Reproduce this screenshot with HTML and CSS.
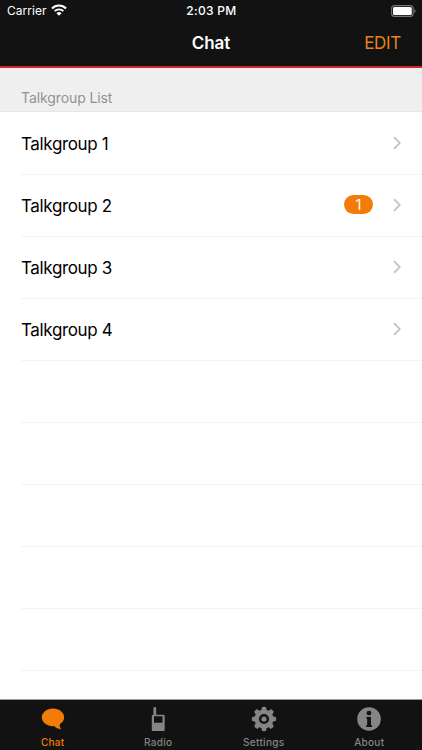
FILE: index.html
```html
<!DOCTYPE html>
<html lang="en">
<head>
    <meta charset="UTF-8">
    <meta name="viewport" content="width=device-width, initial-scale=1.0">
    <title>Chat</title>
    <link rel="stylesheet" href="styles.css">
</head>
<body>
    <header class="header">
        <div class="status-bar">
            <div class="carrier">
                <span>Carrier</span>
                <svg class="wifi" viewBox="0 0 16 12" width="16" height="12">
                    <path d="M1 4.4 A10 10 0 0 1 15 4.4" fill="none" stroke="#fff" stroke-width="2.1"/>
                    <path d="M3.6 7.2 A6.2 6.2 0 0 1 12.4 7.2" fill="none" stroke="#fff" stroke-width="1.9"/>
                    <path d="M8 11.8 L5.4 9.2 A3.7 3.7 0 0 1 10.6 9.2 Z" fill="#fff"/>
                </svg>
            </div>
            <span class="time">2:03 PM</span>
            <svg class="battery" viewBox="0 0 25 12" width="25" height="12">
                <rect x="0.6" y="0.6" width="21.6" height="10.8" rx="3" fill="none" stroke="#777" stroke-width="1.1"/>
                <rect x="2" y="2" width="18.8" height="8" rx="1.5" fill="#fff"/>
                <path d="M23.3 4 Q24.6 4.6 24.6 6 Q24.6 7.4 23.3 8 Z" fill="#777"/>
            </svg>
        </div>
        <div class="nav-bar">
            <h1>Chat</h1>
            <a class="edit">EDIT</a>
        </div>
    </header>

    <main>
        <h2 class="list-title"><span>Talkgroup List</span></h2>
        <ul class="talkgroups">
            <li>
                <span class="name">Talkgroup 1</span>
                <svg class="chevron" viewBox="0 0 8 14" width="8" height="14"><path d="M1 1.2 L6.8 7 L1 12.8"/></svg>
            </li>
            <li>
                <span class="name">Talkgroup 2</span>
                <span class="badge">1</span>
                <svg class="chevron" viewBox="0 0 8 14" width="8" height="14"><path d="M1 1.2 L6.8 7 L1 12.8"/></svg>
            </li>
            <li>
                <span class="name">Talkgroup 3</span>
                <svg class="chevron" viewBox="0 0 8 14" width="8" height="14"><path d="M1 1.2 L6.8 7 L1 12.8"/></svg>
            </li>
            <li>
                <span class="name">Talkgroup 4</span>
                <svg class="chevron" viewBox="0 0 8 14" width="8" height="14"><path d="M1 1.2 L6.8 7 L1 12.8"/></svg>
            </li>
            <li></li>
            <li></li>
            <li></li>
            <li></li>
            <li></li>
            <li></li>
        </ul>
    </main>

    <nav class="tab-bar">
        <a class="tab active">
            <svg viewBox="0 0 26 26" width="26" height="26">
                <path d="M13 2.4 C19.2 2.4 24.2 6.3 24.2 11.3 C24.2 14.1 22.6 16.5 19.9 18.1 C19.4 19.8 20 21.8 21.1 23.4 C18.2 23 15.7 21.8 14.2 20.1 C7.1 20.6 1.8 16.4 1.8 11.3 C1.8 6.3 6.8 2.4 13 2.4 Z"/>
            </svg>
            <span>Chat</span>
        </a>
        <a class="tab">
            <svg viewBox="0 0 26 26" width="26" height="26">
                <path fill-rule="evenodd" d="M8.4 2.2 Q8.4 0.9 9.8 0.9 Q11.2 0.9 11.2 2.2 V8.7 H18.5 Q19.7 8.7 19.7 9.9 V23.9 Q19.7 25.1 18.5 25.1 H8 Q6.8 25.1 6.8 23.9 V9.9 Q6.8 8.7 8.4 8.7 Z M9 10.3 V16.7 H17.5 V10.3 Z"/>
            </svg>
            <span>Radio</span>
        </a>
        <a class="tab">
            <svg viewBox="-13 -13 26 26" width="26" height="26">
                <circle r="7.2" fill="none" stroke="currentColor" stroke-width="4.2"/>
                <circle r="2.6"/>
                <g class="teeth">
                    <path id="tooth" d="M-3.6 -8 L-2.3 -9.8 V-11 Q-2.3 -12.2 0 -12.2 Q2.3 -12.2 2.3 -11 V-9.8 L3.6 -8 Z"/>
                    <use href="#tooth" transform="rotate(45)"/>
                    <use href="#tooth" transform="rotate(90)"/>
                    <use href="#tooth" transform="rotate(135)"/>
                    <use href="#tooth" transform="rotate(180)"/>
                    <use href="#tooth" transform="rotate(225)"/>
                    <use href="#tooth" transform="rotate(270)"/>
                    <use href="#tooth" transform="rotate(315)"/>
                </g>
            </svg>
            <span>Settings</span>
        </a>
        <a class="tab">
            <svg viewBox="0 0 26 26" width="26" height="26">
                <circle cx="13" cy="13" r="11.8"/>
                <circle cx="13" cy="7.1" r="2.4" fill="#121212"/>
                <path d="M10.2 10.9 H15 V19.2 H16.1 V20.9 H10.2 V19.2 H11.2 V12.5 H10.2 Z" fill="#121212"/>
            </svg>
            <span>About</span>
        </a>
    </nav>
</body>
</html>
```

FILE: styles.css
```css
* {
    box-sizing: border-box;
}
body {
    display: flex;
    flex-direction: column;
    height: 750px;
    margin: 0;
    overflow: hidden;
    background-color: #fff;
    color: #000;
    font-family: Inter, "Liberation Sans", sans-serif;
}
.header {
    flex: none;
    height: 68px;
    background-color: #121212;
    border-bottom: 2px solid #d3252d;
    color: #fff;
}
.status-bar,
.nav-bar {
    display: grid;
    grid-template-columns: 1fr auto 1fr;
    align-items: center;
}
.status-bar {
    height: 22px;
    padding: 0 6px 0 7px;
}
.carrier {
    display: flex;
    align-items: center;
    gap: 4px;
    font-size: 12px;
    letter-spacing: 0.05px;
}
.wifi {
    margin-top: -2px;
}
.time {
    font-size: 12px;
    font-weight: 500;
    letter-spacing: 0.3px;
}
.carrier span,
.time {
    padding-bottom: 1px;
}
.battery {
    justify-self: end;
    margin-top: -1px;
}
.nav-bar {
    height: 43px;
    padding: 0 21px;
}
.nav-bar h1 {
    grid-column: 2;
    margin: 0;
    padding-bottom: 1px;
    font-size: 17px;
    font-weight: 600;
    letter-spacing: -0.1px;
}
.edit {
    justify-self: end;
    padding-bottom: 1px;
    color: #e8821a;
    font-size: 17px;
    letter-spacing: -0.3px;
}
main {
    flex: 1;
    min-height: 0;
    overflow: hidden;
}
.list-title {
    height: 44px;
    margin: 0;
    padding: 20px 21px 0;
    background-color: #efeff0;
    border-bottom: 1px solid #e6e6e6;
    color: #929294;
    font-size: 14px;
    font-weight: 400;
    letter-spacing: -0.1px;
    line-height: 20px;
}
.talkgroups {
    margin: 0;
    padding: 0 0 0 21px;
    list-style: none;
}
.talkgroups li {
    display: flex;
    align-items: center;
    height: 62px;
    padding-right: 21px;
    box-shadow: 0 1px 0 #f3f3f3;
    font-size: 17px;
}
.name {
    flex: 1;
    padding-top: 1px;
    letter-spacing: -0.36px;
}
.badge {
    width: 29px;
    height: 19px;
    margin: -2px 20px 0 0;
    border-radius: 10px;
    background-color: #f27c07;
    color: #fff;
    font-size: 14.5px;
    line-height: 20px;
    text-align: center;
}
.chevron {
    fill: none;
    stroke: #c2c2c4;
    stroke-width: 1.8;
}
.tab-bar {
    display: flex;
    flex: none;
    height: 51px;
    padding-top: 6px;
    background-color: #121212;
    border-top: 1px solid #9d9d9d;
}
.tab {
    display: flex;
    flex: 1;
    flex-direction: column;
    align-items: center;
    color: #858585;
    font-size: 10px;
    font-weight: 500;
    letter-spacing: 0.3px;
    line-height: 12px;
}
.tab svg {
    fill: currentColor;
}
.tab span {
    margin-top: 4px;
}
.tab.active {
    color: #f27c07;
}
```
